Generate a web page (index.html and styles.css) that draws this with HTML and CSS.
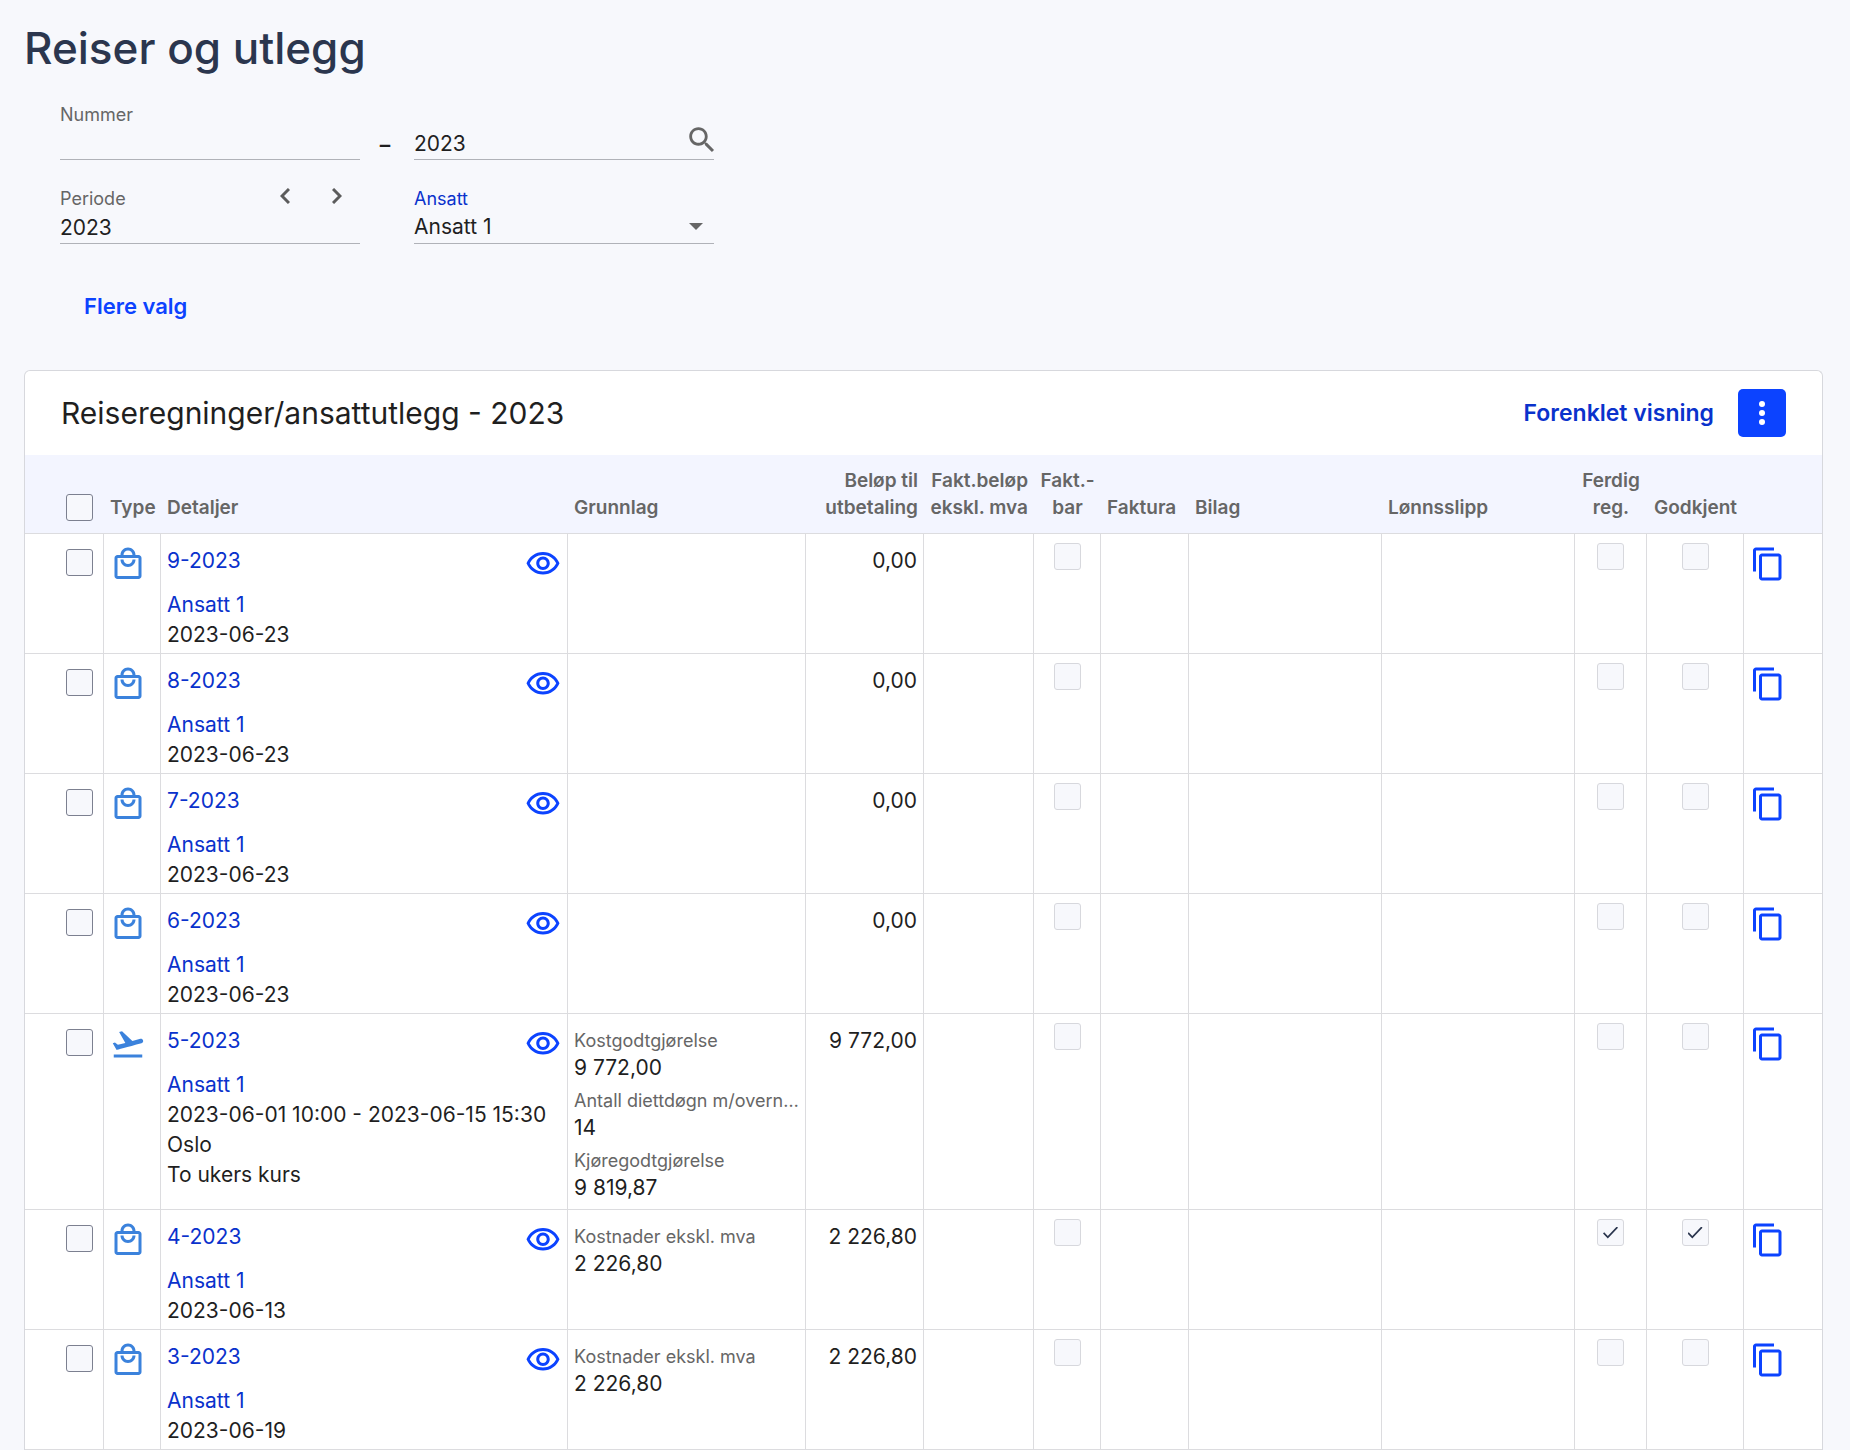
FILE: index.html
```
<!DOCTYPE html>
<html lang="no">

<head>
    <meta charset="UTF-8" />
    <meta name="viewport" content="width=device-width, initial-scale=1.0" />
    <title>Reiser og utlegg</title>
    <link rel="stylesheet" href="styles.css">
</head>

<body>
    <!-- shared icons -->
    <svg class="icon-defs" aria-hidden="true">
        <symbol id="icon-bag" viewBox="0 0 24 24">
            <path d="M19 6h-2c0-2.76-2.24-5-5-5S7 3.24 7 6H5c-1.1 0-1.99.9-1.99 2L3 20c0 1.1.9 2 2 2h14c1.1 0 2-.9 2-2V8c0-1.1-.9-2-2-2zm-7-3c1.66 0 3 1.34 3 3H9c0-1.66 1.34-3 3-3zm7 17H5V8h14v12zm-7-8c-1.66 0-3-1.34-3-3H7c0 2.76 2.24 5 5 5s5-2.24 5-5h-2c0 1.66-1.34 3-3 3z" />
        </symbol>
        <symbol id="icon-plane" viewBox="0 0 24 24">
            <path d="M2.5 19h19v2h-19v-2zm19.57-9.36c-.21-.8-1.04-1.28-1.84-1.06L14.92 10l-6.9-6.43-1.93.51 4.14 7.17-4.97 1.33-1.97-1.54-1.45.39 2.59 4.49s7.12-1.9 16.57-4.43c.81-.23 1.28-1.05 1.07-1.85z" />
        </symbol>
        <symbol id="icon-eye" viewBox="0 0 24 24">
            <path d="M12 6c3.79 0 7.17 2.13 8.82 5.5C19.17 14.87 15.79 17 12 17s-7.17-2.13-8.82-5.5C4.83 8.13 8.21 6 12 6m0-2C7 4 2.73 7.11 1 11.5 2.73 15.89 7 19 12 19s9.27-3.11 11-7.5C21.27 7.11 17 4 12 4zm0 5c1.38 0 2.5 1.12 2.5 2.5S13.38 14 12 14s-2.5-1.12-2.5-2.5S10.62 9 12 9m0-2c-2.48 0-4.5 2.02-4.5 4.5S9.52 16 12 16s4.5-2.02 4.5-4.5S14.48 7 12 7z" />
        </symbol>
        <symbol id="icon-copy" viewBox="0 0 24 24">
            <path d="M16 1H4c-1.1 0-2 .9-2 2v14h2V3h12V1zm3 4H8c-1.1 0-2 .9-2 2v14c0 1.1.9 2 2 2h11c1.1 0 2-.9 2-2V7c0-1.1-.9-2-2-2zm0 16H8V7h11v14z" />
        </symbol>
    </svg>

    <h1 class="page-title">Reiser og utlegg</h1>

    <!-- filter section -->
    <form class="filters">
        <div class="field">
            <label for="numberFrom">Nummer</label>
            <input type="text" id="numberFrom">
        </div>
        <span class="dash">–</span>
        <div class="field">
            <label for="numberYear" class="hidden-label">År</label>
            <input type="text" id="numberYear" value="2023">
            <button type="button" class="search-btn" aria-label="Søk">
                <svg viewBox="0 0 24 24"><path d="M15.5 14h-.79l-.28-.27C15.41 12.59 16 11.11 16 9.5 16 5.91 13.09 3 9.5 3S3 5.91 3 9.5 5.91 16 9.5 16c1.61 0 3.09-.59 4.23-1.57l.27.28v.79l5 4.99L20.49 19l-4.99-5zm-6 0C7.01 14 5 11.99 5 9.5S7.01 5 9.5 5 14 7.01 14 9.5 11.99 14 9.5 14z" /></svg>
            </button>
        </div>
        <div class="field">
            <label for="period">Periode</label>
            <input type="text" id="period" value="2023">
            <div class="period-nav">
                <button type="button" aria-label="Forrige"><svg viewBox="0 0 10 16"><path d="M9 1 2 8l7 7" /></svg></button>
                <button type="button" aria-label="Neste"><svg viewBox="0 0 10 16"><path d="m1 1 7 7-7 7" /></svg></button>
            </div>
        </div>
        <span></span>
        <div class="field">
            <label for="employee" class="active-label">Ansatt</label>
            <select id="employee">
                <option>Ansatt 1</option>
            </select>
            <svg class="select-arrow" viewBox="0 0 14 7"><path d="M0 0h14L7 7z" /></svg>
        </div>
    </form>
    <button class="more-btn">Flere valg</button>

    <!-- list section -->
    <div class="card">
        <div class="card-header">
            <h2>Reiseregninger/ansattutlegg - 2023</h2>
            <a href="#" class="simple-view">Forenklet visning</a>
            <button class="menu-btn" aria-label="Meny">
                <svg viewBox="0 0 6 24"><circle cx="3" cy="3" r="3" /><circle cx="3" cy="12" r="3" /><circle cx="3" cy="21" r="3" /></svg>
            </button>
        </div>

        <table class="expenses">
            <colgroup>
                <col class="col-select">
                <col class="col-type">
                <col>
                <col class="col-basis">
                <col class="col-amount">
                <col class="col-billed">
                <col class="col-billable">
                <col class="col-invoice">
                <col class="col-wide">
                <col class="col-wide">
                <col class="col-done">
                <col class="col-approved">
                <col class="col-copy">
            </colgroup>
            <thead>
                <tr>
                    <th class="select"><input type="checkbox" aria-label="Velg alle"></th>
                    <th>Type</th>
                    <th>Detaljer</th>
                    <th>Grunnlag</th>
                    <th class="right">Beløp til<br>utbetaling</th>
                    <th class="right">Fakt.beløp<br>ekskl. mva</th>
                    <th class="center">Fakt.-<br>bar</th>
                    <th>Faktura</th>
                    <th>Bilag</th>
                    <th>Lønnsslipp</th>
                    <th class="center">Ferdig<br>reg.</th>
                    <th class="center">Godkjent</th>
                    <th></th>
                </tr>
            </thead>
            <tbody>
                <tr>
                    <td class="select"><input type="checkbox" aria-label="Velg 9-2023"></td>
                    <td class="type"><svg><use href="#icon-bag" /></svg></td>
                    <td>
                        <div class="detail-top"><a href="#">9-2023</a><button aria-label="Vis"><svg><use href="#icon-eye" /></svg></button></div>
                        <a href="#">Ansatt 1</a>
                        <div>2023-06-23</div>
                    </td>
                    <td></td>
                    <td class="right">0,00</td>
                    <td></td>
                    <td class="status"><input type="checkbox" aria-label="Fakturerbar" disabled></td>
                    <td></td>
                    <td></td>
                    <td></td>
                    <td class="status"><input type="checkbox" aria-label="Ferdig registrert" disabled></td>
                    <td class="status"><input type="checkbox" aria-label="Godkjent" disabled></td>
                    <td><button aria-label="Kopier"><svg><use href="#icon-copy" /></svg></button></td>
                </tr>
                <tr>
                    <td class="select"><input type="checkbox" aria-label="Velg 8-2023"></td>
                    <td class="type"><svg><use href="#icon-bag" /></svg></td>
                    <td>
                        <div class="detail-top"><a href="#">8-2023</a><button aria-label="Vis"><svg><use href="#icon-eye" /></svg></button></div>
                        <a href="#">Ansatt 1</a>
                        <div>2023-06-23</div>
                    </td>
                    <td></td>
                    <td class="right">0,00</td>
                    <td></td>
                    <td class="status"><input type="checkbox" aria-label="Fakturerbar" disabled></td>
                    <td></td>
                    <td></td>
                    <td></td>
                    <td class="status"><input type="checkbox" aria-label="Ferdig registrert" disabled></td>
                    <td class="status"><input type="checkbox" aria-label="Godkjent" disabled></td>
                    <td><button aria-label="Kopier"><svg><use href="#icon-copy" /></svg></button></td>
                </tr>
                <tr>
                    <td class="select"><input type="checkbox" aria-label="Velg 7-2023"></td>
                    <td class="type"><svg><use href="#icon-bag" /></svg></td>
                    <td>
                        <div class="detail-top"><a href="#">7-2023</a><button aria-label="Vis"><svg><use href="#icon-eye" /></svg></button></div>
                        <a href="#">Ansatt 1</a>
                        <div>2023-06-23</div>
                    </td>
                    <td></td>
                    <td class="right">0,00</td>
                    <td></td>
                    <td class="status"><input type="checkbox" aria-label="Fakturerbar" disabled></td>
                    <td></td>
                    <td></td>
                    <td></td>
                    <td class="status"><input type="checkbox" aria-label="Ferdig registrert" disabled></td>
                    <td class="status"><input type="checkbox" aria-label="Godkjent" disabled></td>
                    <td><button aria-label="Kopier"><svg><use href="#icon-copy" /></svg></button></td>
                </tr>
                <tr>
                    <td class="select"><input type="checkbox" aria-label="Velg 6-2023"></td>
                    <td class="type"><svg><use href="#icon-bag" /></svg></td>
                    <td>
                        <div class="detail-top"><a href="#">6-2023</a><button aria-label="Vis"><svg><use href="#icon-eye" /></svg></button></div>
                        <a href="#">Ansatt 1</a>
                        <div>2023-06-23</div>
                    </td>
                    <td></td>
                    <td class="right">0,00</td>
                    <td></td>
                    <td class="status"><input type="checkbox" aria-label="Fakturerbar" disabled></td>
                    <td></td>
                    <td></td>
                    <td></td>
                    <td class="status"><input type="checkbox" aria-label="Ferdig registrert" disabled></td>
                    <td class="status"><input type="checkbox" aria-label="Godkjent" disabled></td>
                    <td><button aria-label="Kopier"><svg><use href="#icon-copy" /></svg></button></td>
                </tr>
                <tr>
                    <td class="select"><input type="checkbox" aria-label="Velg 5-2023"></td>
                    <td class="type"><svg><use href="#icon-plane" /></svg></td>
                    <td>
                        <div class="detail-top"><a href="#">5-2023</a><button aria-label="Vis"><svg><use href="#icon-eye" /></svg></button></div>
                        <a href="#">Ansatt 1</a>
                        <div>2023-06-01 10:00 - 2023-06-15 15:30</div>
                        <div>Oslo</div>
                        <div>To ukers kurs</div>
                    </td>
                    <td>
                        <div class="basis-label">Kostgodtgjørelse</div>
                        <div class="basis-value">9 772,00</div>
                        <div class="basis-label">Antall diettdøgn m/overn…</div>
                        <div class="basis-value">14</div>
                        <div class="basis-label">Kjøregodtgjørelse</div>
                        <div class="basis-value">9 819,87</div>
                    </td>
                    <td class="right">9 772,00</td>
                    <td></td>
                    <td class="status"><input type="checkbox" aria-label="Fakturerbar" disabled></td>
                    <td></td>
                    <td></td>
                    <td></td>
                    <td class="status"><input type="checkbox" aria-label="Ferdig registrert" disabled></td>
                    <td class="status"><input type="checkbox" aria-label="Godkjent" disabled></td>
                    <td><button aria-label="Kopier"><svg><use href="#icon-copy" /></svg></button></td>
                </tr>
                <tr>
                    <td class="select"><input type="checkbox" aria-label="Velg 4-2023"></td>
                    <td class="type"><svg><use href="#icon-bag" /></svg></td>
                    <td>
                        <div class="detail-top"><a href="#">4-2023</a><button aria-label="Vis"><svg><use href="#icon-eye" /></svg></button></div>
                        <a href="#">Ansatt 1</a>
                        <div>2023-06-13</div>
                    </td>
                    <td>
                        <div class="basis-label">Kostnader ekskl. mva</div>
                        <div class="basis-value">2 226,80</div>
                    </td>
                    <td class="right">2 226,80</td>
                    <td></td>
                    <td class="status"><input type="checkbox" aria-label="Fakturerbar" disabled></td>
                    <td></td>
                    <td></td>
                    <td></td>
                    <td class="status"><input type="checkbox" aria-label="Ferdig registrert" checked disabled></td>
                    <td class="status"><input type="checkbox" aria-label="Godkjent" checked disabled></td>
                    <td><button aria-label="Kopier"><svg><use href="#icon-copy" /></svg></button></td>
                </tr>
                <tr>
                    <td class="select"><input type="checkbox" aria-label="Velg 3-2023"></td>
                    <td class="type"><svg><use href="#icon-bag" /></svg></td>
                    <td>
                        <div class="detail-top"><a href="#">3-2023</a><button aria-label="Vis"><svg><use href="#icon-eye" /></svg></button></div>
                        <a href="#">Ansatt 1</a>
                        <div>2023-06-19</div>
                    </td>
                    <td>
                        <div class="basis-label">Kostnader ekskl. mva</div>
                        <div class="basis-value">2 226,80</div>
                    </td>
                    <td class="right">2 226,80</td>
                    <td></td>
                    <td class="status"><input type="checkbox" aria-label="Fakturerbar" disabled></td>
                    <td></td>
                    <td></td>
                    <td></td>
                    <td class="status"><input type="checkbox" aria-label="Ferdig registrert" disabled></td>
                    <td class="status"><input type="checkbox" aria-label="Godkjent" disabled></td>
                    <td><button aria-label="Kopier"><svg><use href="#icon-copy" /></svg></button></td>
                </tr>
            </tbody>
        </table>
    </div>
</body>

</html>
```
FILE: styles.css
```
* {
    box-sizing: border-box;
}

body {
    margin: 0;
    padding: 21px 27px 0 24px;
    background-color: #f7f8fc;
    color: #1f1f1f;
    font-family: Inter, Roboto, sans-serif;
    font-size: 21px;
    line-height: 30px;
}

a {
    color: #0a32cc;
    text-decoration: none;
}

button {
    padding: 0;
    border: none;
    background: none;
    color: inherit;
    font: inherit;
    cursor: pointer;
}

svg {
    display: block;
    fill: currentColor;
}

.icon-defs {
    display: none;
}

.page-title {
    margin: 0 0 28px;
    color: #2b364e;
    font-size: 44px;
    font-weight: 500;
    line-height: 54px;
}

/* filters */
.filters {
    display: grid;
    grid-template-columns: 300px 54px 300px;
    row-gap: 27px;
    padding-left: 36px;
}

.field {
    position: relative;
    display: flex;
    flex-direction: column;
    border-bottom: 1px solid #b0b2b8;
}

.field label {
    color: #666;
    font-size: 18px;
    line-height: 24px;
}

.field .hidden-label {
    visibility: hidden;
}

.field .active-label {
    color: #0a32cc;
}

.field input,
.field select {
    width: 100%;
    height: 32px;
    padding: 0;
    border: none;
    outline: none;
    background: none;
    color: inherit;
    font: inherit;
    appearance: none;
}

.dash {
    align-self: end;
    padding-right: 4px;
    font-weight: 600;
    text-align: center;
}

.search-btn {
    position: absolute;
    right: -5px;
    bottom: 2px;
    color: #666;
}

.search-btn svg {
    width: 34px;
    height: 34px;
}

.period-nav {
    position: absolute;
    top: 1px;
    right: 18px;
    display: flex;
    gap: 42px;
    color: #5c5c5c;
}

.period-nav svg {
    width: 10px;
    height: 16px;
    fill: none;
    stroke: currentColor;
    stroke-width: 3;
}

.select-arrow {
    position: absolute;
    right: 11px;
    bottom: 13px;
    width: 14px;
    height: 7px;
    color: #666;
    pointer-events: none;
}

.more-btn {
    height: 48px;
    margin: 38px 0 40px 36px;
    padding: 0 24px;
    color: #0c43ff;
    font-size: 22px;
    font-weight: 600;
}

/* card */
.card {
    border: 1px solid #d7d8dd;
    border-bottom: none;
    border-radius: 6px 6px 0 0;
    background-color: #fff;
}

.card-header {
    display: flex;
    align-items: center;
    gap: 24px;
    height: 84px;
    padding: 0 36px;
}

.card-header h2 {
    flex: 1;
    margin: 0;
    font-size: 30px;
    font-weight: 400;
}

.simple-view {
    font-size: 23px;
    font-weight: 600;
}

.menu-btn {
    display: flex;
    align-items: center;
    justify-content: center;
    width: 48px;
    height: 48px;
    border-radius: 5px;
    background-color: #0c43ff;
    color: #fff;
}

.menu-btn svg {
    width: 6px;
    height: 24px;
}

/* table */
.expenses {
    width: 100%;
    table-layout: fixed;
    border-collapse: separate;
    border-spacing: 0;
}

.col-select {
    width: 79px;
}

.col-type {
    width: 57px;
}

.col-basis {
    width: 238px;
}

.col-amount {
    width: 118px;
}

.col-billed {
    width: 110px;
}

.col-billable {
    width: 67px;
}

.col-invoice {
    width: 88px;
}

.col-wide {
    width: 193px;
}

.col-done {
    width: 72px;
}

.col-approved {
    width: 97px;
}

.col-copy {
    width: 78px;
}

.expenses th {
    padding: 12px 6px;
    border-bottom: 1px solid #dcdcdf;
    background-color: #f3f5ff;
    color: #666;
    font-size: 19px;
    font-weight: 600;
    line-height: 27px;
    text-align: left;
    vertical-align: bottom;
    white-space: nowrap;
}

.expenses td {
    padding: 12px 6px 3px;
    border-right: 1px solid #dcdcdf;
    border-bottom: 1px solid #dcdcdf;
    vertical-align: top;
    white-space: nowrap;
}

.expenses td:last-child {
    border-right: none;
}

.expenses .right {
    text-align: right;
}

.expenses .center {
    text-align: center;
}

.expenses td svg {
    width: 36px;
    height: 36px;
}

.expenses td button {
    color: #0c43ff;
}

.expenses .type {
    color: #3b82dc;
}

.expenses .select {
    padding-left: 41px;
}

.expenses td.select {
    padding-top: 15px;
}

.expenses .status {
    padding-top: 9px;
    text-align: center;
}

.expenses input {
    display: block;
    width: 27px;
    height: 27px;
    margin: 0;
    border: 1px solid #7c8090;
    border-radius: 3px;
    background-color: #f7f8fc;
    appearance: none;
}

.expenses .status input {
    margin: 0 auto;
    border-color: #d7d8dd;
}

.expenses input:checked {
    display: grid;
    place-items: center;
}

.expenses input:checked::after {
    content: "";
    width: 15px;
    height: 12px;
    background-color: #2b364e;
    clip-path: polygon(32% 79%, 8% 48%, 0 58%, 32% 100%, 100% 10%, 92% 0);
}

.detail-top {
    display: flex;
    justify-content: space-between;
    margin-bottom: 8px;
}

.basis-label {
    color: #666;
    font-size: 18px;
    line-height: 30px;
}

.basis-value {
    margin-bottom: 6px;
    line-height: 24px;
}
```
